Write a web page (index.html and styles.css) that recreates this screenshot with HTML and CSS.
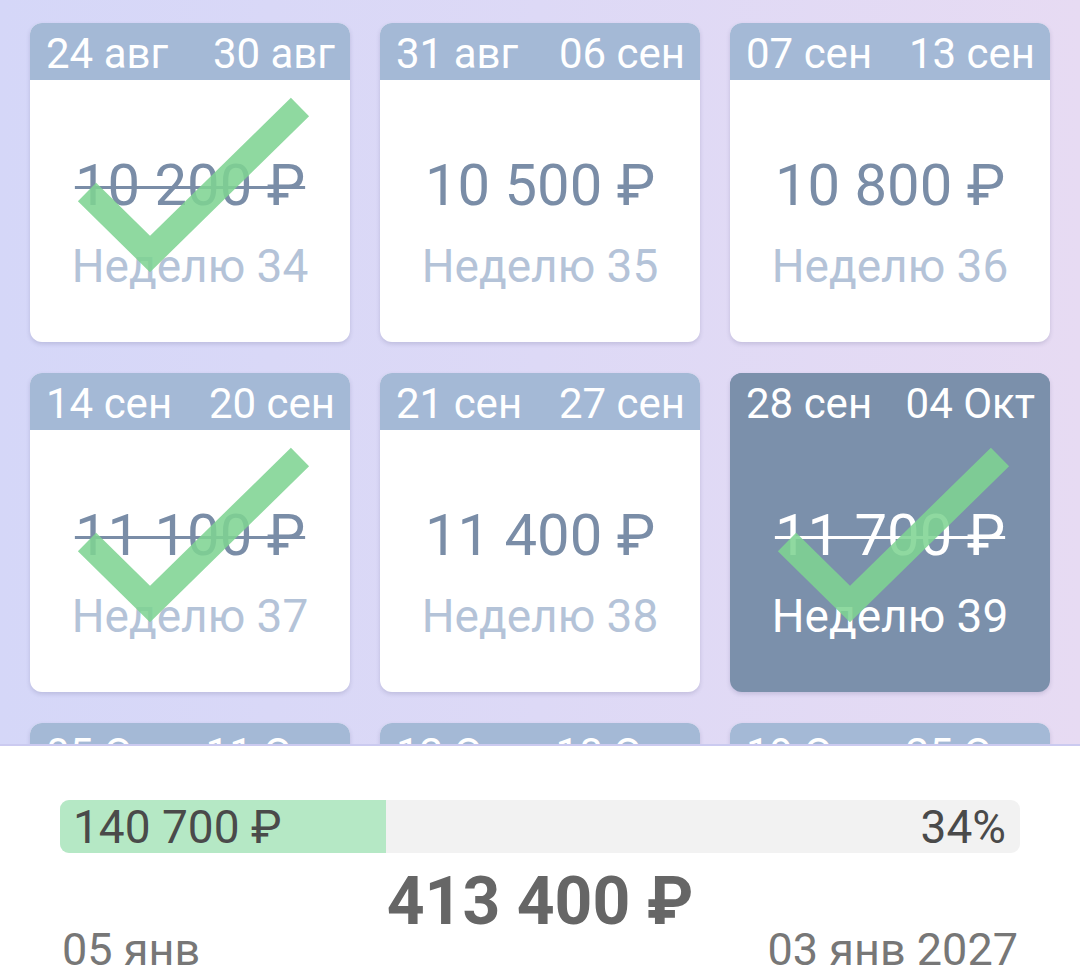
FILE: index.html
```html
<!DOCTYPE html>
<html lang="ru">
<head>
    <meta charset="UTF-8">
    <meta name="viewport" content="width=device-width, initial-scale=1.0">
    <title>Копилка по неделям</title>
    <link rel="stylesheet" href="styles.css">
</head>
<body>

<div class="app">
    <div class="weeks">
        <div class="grid">
            <div class="card done">
                <div class="card-head"><span>24 авг</span><span>30 авг</span></div>
                <div class="card-body">
                    <div class="price">10 200 ₽</div>
                    <div class="week">Неделю 34</div>
                </div>
                <svg class="check" viewBox="0 0 320 320"><polyline points="57,169 120,231 270,84"/></svg>
            </div>
            <div class="card">
                <div class="card-head"><span>31 авг</span><span>06 сен</span></div>
                <div class="card-body">
                    <div class="price">10 500 ₽</div>
                    <div class="week">Неделю 35</div>
                </div>
            </div>
            <div class="card">
                <div class="card-head"><span>07 сен</span><span>13 сен</span></div>
                <div class="card-body">
                    <div class="price">10 800 ₽</div>
                    <div class="week">Неделю 36</div>
                </div>
            </div>

            <div class="card done">
                <div class="card-head"><span>14 сен</span><span>20 сен</span></div>
                <div class="card-body">
                    <div class="price">11 100 ₽</div>
                    <div class="week">Неделю 37</div>
                </div>
                <svg class="check" viewBox="0 0 320 320"><polyline points="57,169 120,231 270,84"/></svg>
            </div>
            <div class="card">
                <div class="card-head"><span>21 сен</span><span>27 сен</span></div>
                <div class="card-body">
                    <div class="price">11 400 ₽</div>
                    <div class="week">Неделю 38</div>
                </div>
            </div>
            <div class="card done current">
                <div class="card-head"><span>28 сен</span><span>04 Окт</span></div>
                <div class="card-body">
                    <div class="price">11 700 ₽</div>
                    <div class="week">Неделю 39</div>
                </div>
                <svg class="check" viewBox="0 0 320 320"><polyline points="57,169 120,231 270,84"/></svg>
            </div>

            <div class="card">
                <div class="card-head"><span>05 Окт</span><span>11 Окт</span></div>
                <div class="card-body">
                    <div class="price">12 000 ₽</div>
                    <div class="week">Неделю 40</div>
                </div>
            </div>
            <div class="card">
                <div class="card-head"><span>12 Окт</span><span>18 Окт</span></div>
                <div class="card-body">
                    <div class="price">12 300 ₽</div>
                    <div class="week">Неделю 41</div>
                </div>
            </div>
            <div class="card">
                <div class="card-head"><span>19 Окт</span><span>25 Окт</span></div>
                <div class="card-body">
                    <div class="price">12 600 ₽</div>
                    <div class="week">Неделю 42</div>
                </div>
            </div>
        </div>
    </div>

    <div class="summary">
        <div class="progress">
            <div class="progress-fill" style="width: 34%"></div>
            <span class="saved">140 700 ₽</span>
            <span class="percent">34%</span>
        </div>
        <div class="total">413 400 ₽</div>
        <div class="dates">
            <span>05 янв</span>
            <span>03 янв 2027</span>
        </div>
    </div>
</div>

</body>
</html>
```

FILE: styles.css
```css
* {
    box-sizing: border-box;
}

body {
    margin: 0;
    font-family: Roboto, "Noto Sans", sans-serif;
    background: #fff;
}

.app {
    display: flex;
    flex-direction: column;
    height: 977px;
    width: 1080px;
}

.weeks {
    flex: 1;
    overflow: hidden;
    background: linear-gradient(90deg, #d5d7f8 0%, #ddd9f6 50%, #e7dbf3 100%);
}

.grid {
    display: grid;
    grid-template-columns: repeat(3, 320px);
    column-gap: 30px;
    row-gap: 31px;
    padding: 23px 30px 0 30px;
}

.card {
    position: relative;
    height: 319px;
    background: white;
    border-radius: 12px;
    box-shadow: 0 2px 4px rgba(60, 60, 110, 0.18);
    overflow: hidden;
}

.card-head {
    display: flex;
    justify-content: space-between;
    height: 57px;
    padding: 0 15px 0 16px;
    background-color: #a4b9d6;
    color: white;
    font-size: 42px;
    line-height: 62px;
}

.card-body {
    display: flex;
    flex-direction: column;
    align-items: center;
    padding-top: 73px;
}

.price {
    font-size: 58px;
    line-height: 64px;
    color: #7a8da7;
}

.week {
    margin-top: 22px;
    font-size: 46px;
    line-height: 54px;
    color: #b4c3d8;
}

.done .price {
    text-decoration: line-through;
    text-decoration-thickness: 3px;
}

.check {
    position: absolute;
    top: 0;
    left: 0;
    width: 320px;
    height: 320px;
}

.check polyline {
    fill: none;
    stroke: #7ed392;
    stroke-width: 26;
    stroke-opacity: 0.87;
}

.card.current {
    background-color: #7b90ab;
}

.card.current .card-head {
    background-color: #7b90ab;
}

.card.current .price,
.card.current .week {
    color: white;
}

.summary {
    height: 233px;
    border-top: 2px solid #cbcaf0;
    background: white;
    padding: 54px 60px 0 60px;
}

.progress {
    position: relative;
    display: flex;
    justify-content: space-between;
    align-items: center;
    height: 53px;
    padding: 0 14px 0 13px;
    background-color: #f2f2f2;
    border-radius: 9px;
    overflow: hidden;
    font-size: 46px;
    color: #4a4a4a;
}

.progress-fill {
    position: absolute;
    top: 0;
    left: 0;
    bottom: 0;
    background-color: #b5e8c5;
}

.saved,
.percent {
    position: relative;
}

.total {
    margin-top: 21px;
    text-align: center;
    font-size: 66px;
    font-weight: bold;
    line-height: 56px;
    color: #666;
}

.dates {
    display: flex;
    justify-content: space-between;
    padding: 0 2px;
    font-size: 45px;
    line-height: 40px;
    color: #777;
}
```
